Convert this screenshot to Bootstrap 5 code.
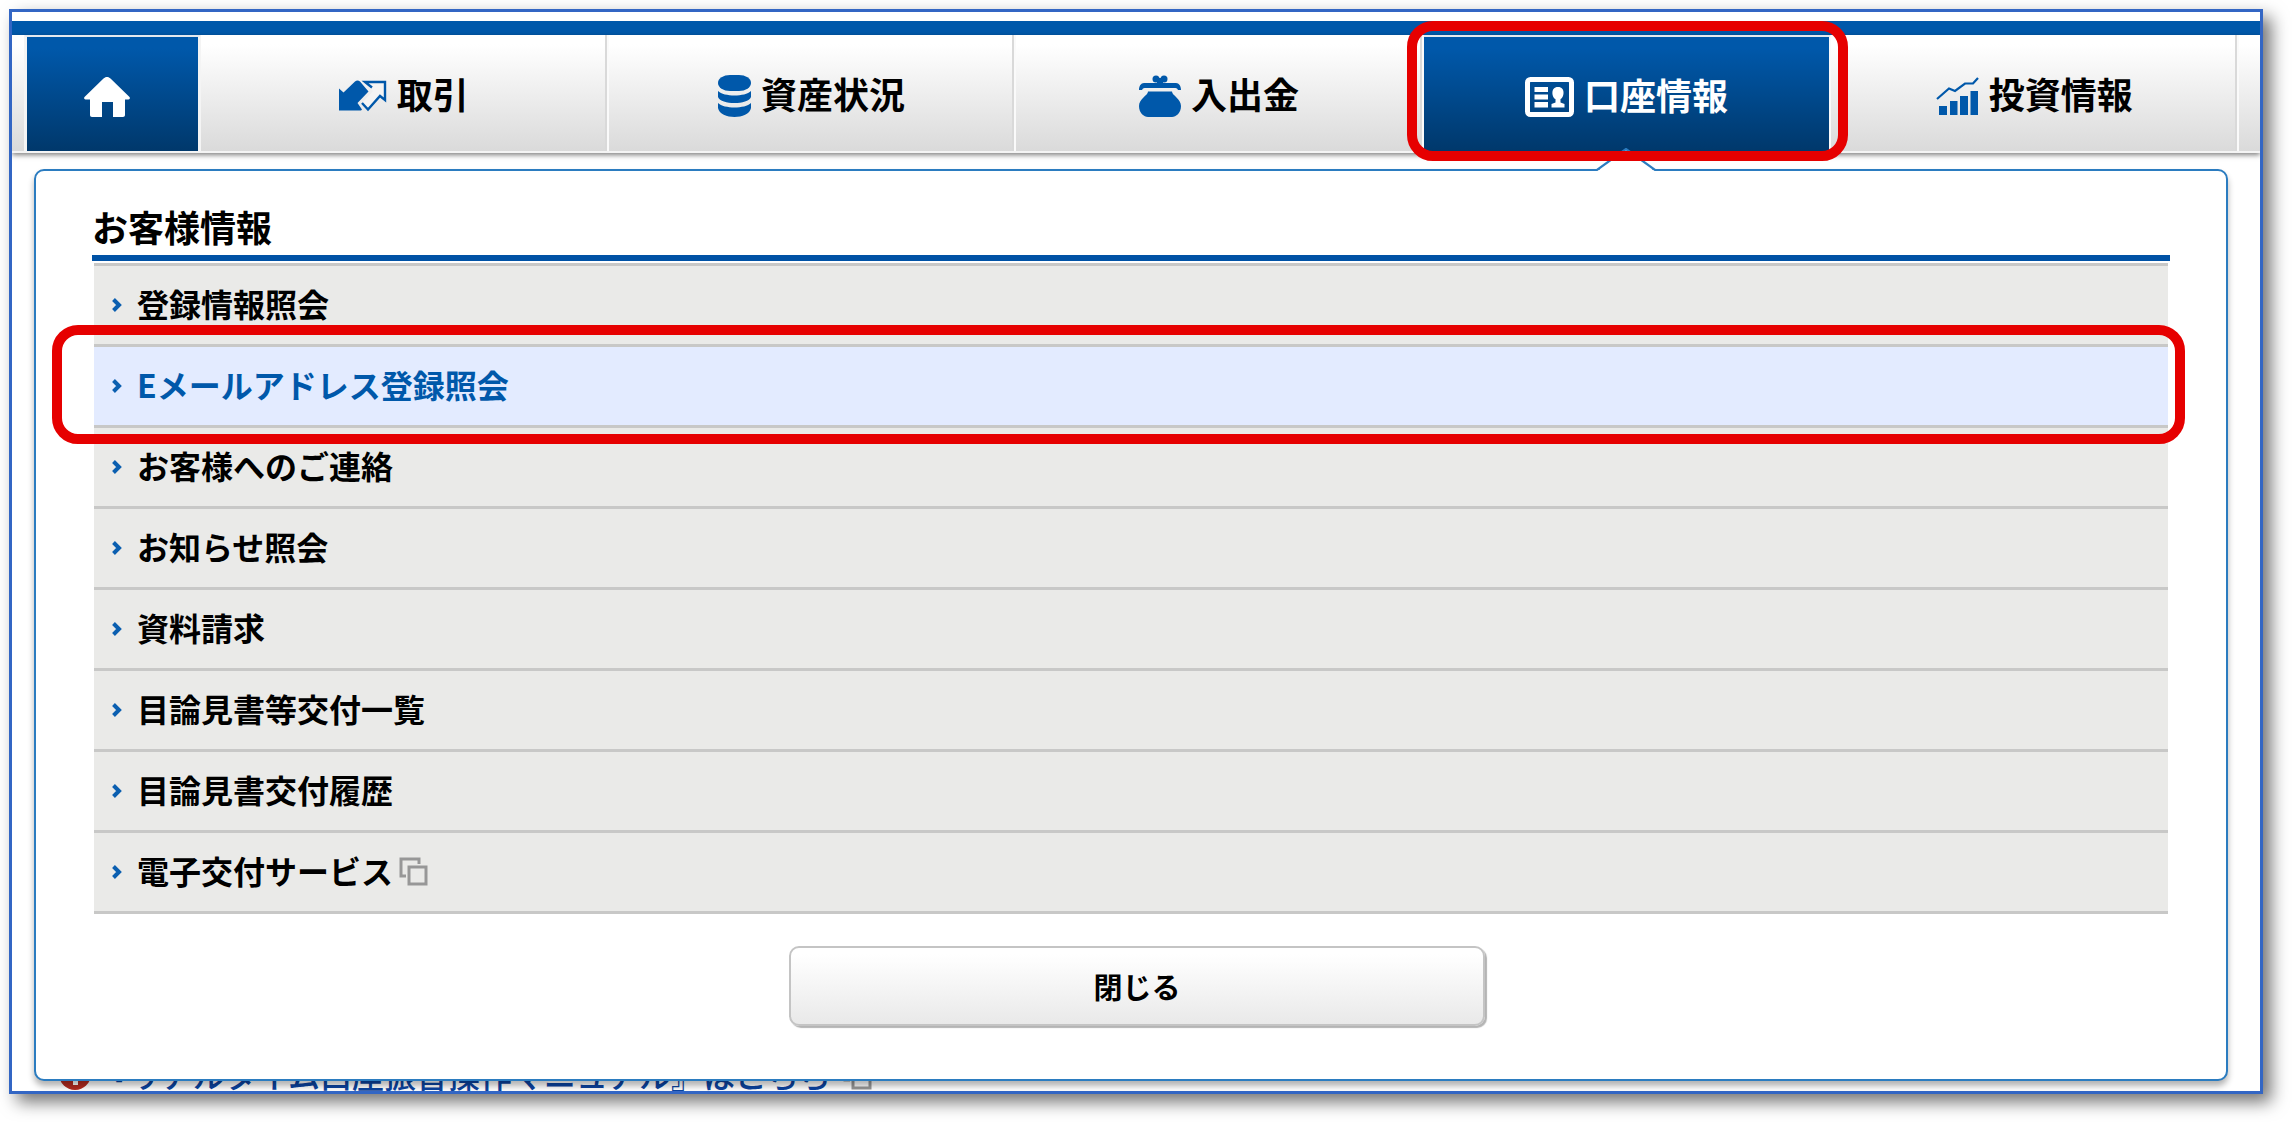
<!DOCTYPE html>
<html lang="ja">
<head>
<meta charset="utf-8">
<meta name="viewport" content="width=device-width, initial-scale=1">
<title>口座情報</title>
<link href="https://cdn.jsdelivr.net/npm/bootstrap@5.3.0/dist/css/bootstrap.min.css" rel="stylesheet">
<style>
  body {
    font-family: "Noto Sans CJK JP", sans-serif;
    color: #000;
    background: #fff;
    padding: 9px 29px 29px 9px;
  }
  .site-frame {
    border: 3px solid #3366c4;
    box-shadow: 8px 8px 16px rgba(0, 0, 0, .55);
    background: #fff;
    padding-top: 9px;
  }
  .site-clip { overflow: hidden; }
  .top-stripe { height: 14px; background: #0058aa; }
  .global-nav {
    height: 118px;
    border-bottom: 2px solid #f4f4f4;
    background: linear-gradient(#fff 8%, #dadada);
    box-shadow: 0 2px 5px rgba(0, 0, 0, .5);
    padding: 0 21px 0 12px;
  }
  .global-nav a {
    flex: 1 1 0;
    font-size: 36px;
    line-height: 54px;
    font-weight: 700;
    color: #000;
    gap: 10px;
    padding-top: 6px;
    border-right: 2px solid #fafafa;
    box-shadow: inset -2px 0 #d9d9d9;
  }
  .nav-text { padding-bottom: 6px; }
  .global-nav .nav-home {
    flex: 0 0 177px;
    border-left: 3px solid #f4f4f4;
    border-right: 3px solid #f4f4f4;
    padding-right: 12px;
  }
  .global-nav .nav-home, .global-nav .nav-current {
    color: #fff;
    background: linear-gradient(#0058aa 10%, #00386b) padding-box;
    border-top: 2px solid #e4e8ee;
    box-shadow: none;
  }
  .mark-ring {
    position: absolute;
    border: 10px solid #e60000;
    border-radius: 26px;
    pointer-events: none;
    z-index: 3;
  }
  .ring-tab { top: -16px; bottom: -10px; left: -17px; right: -19px; }
  .ring-row { top: -22px; bottom: -19px; left: -42px; right: -17px; }
  .mega-panel {
    z-index: 2;
    margin: 16px 32px 0 22px;
    border: 2px solid #2b7cc0;
    border-radius: 10px;
    background: #fff;
    box-shadow: 0 5px 6px rgba(0, 0, 0, .3);
    padding: 28px 56px 53px 56px;
  }
  .panel-arrow {
    position: absolute;
    top: -23px;
    left: 72.6%;
    transform: translateX(-50%);
  }
  .panel-title {
    font-size: 36px;
    line-height: 54px;
    font-weight: 700;
    margin: 0 0 2px;
    padding-bottom: 2px;
    border-bottom: 6px solid #0052a5;
  }
  .menu-list { margin: 0 2px; border-top: 3px solid #c8c8c7; }
  .menu-list .list-group-item {
    position: relative;
    border: 0;
    border-bottom: 3px solid #c8c8c7;
    background: #eaeae8;
    padding: 0;
  }
  .menu-list a {
    font-size: 32px;
    line-height: 74px;
    font-weight: 700;
    color: #000;
    padding: 0 0 4px 18px;
  }
  .menu-list .item-hot { background: #e3ebff; }
  .menu-list .item-hot a { color: #0058aa; }
  .chev { margin: 3px 15px 0 0; }
  .ext-icon { margin: 4px 0 0 6px; }
  .close-btn {
    width: 696px;
    max-width: 100%;
    height: 80px;
    margin: 32px 0 0 12px;
    border: 2px solid #c4c4c4;
    border-radius: 10px;
    background: linear-gradient(#fff 8%, #e9e9e9);
    box-shadow: 2px 2px 1px #b4b4b4;
    font-size: 29px;
    line-height: 44px;
    font-weight: 700;
    color: #000;
  }
  .notice-line {
    margin: -24px 0 0 47px;
    height: 34px;
    font-size: 32px;
    line-height: 34px;
    font-weight: 500;
    gap: 6px;
  }
  .notice-line a { color: #0b43a0; }
</style>
<script src="https://cdn.jsdelivr.net/npm/bootstrap@5.3.0/dist/js/bootstrap.bundle.min.js"></script>
</head>
<body>
<svg class="d-none" aria-hidden="true">
  <symbol id="chevron" viewBox="0 0 10 14"><path d="M1.500 1.500 7 7 1.500 12.500" fill="none" stroke="#0b5fb0" stroke-width="4"/></symbol>
  <symbol id="window" viewBox="0 0 30 30"><path d="M7 19H2V2h18v5M10 10h17v17H10z" fill="none" stroke="#979797" stroke-width="3"/></symbol>
</svg>
<div class="site-frame">
<div class="site-clip">
  <div class="top-stripe"></div>
  <nav class="global-nav d-flex position-relative" aria-label="メイン">
    <a href="#" class="nav-home d-flex align-items-center justify-content-center" aria-label="ホーム">
      <svg width="46" height="40" viewBox="0 0 46 40"><path d="M23 0c1.500 0 2.500.6 3.500 1.600L45.500 20c.8 1 .3 2.500-1 2.500H41V38c0 1.200-.8 2-2 2H29V25H18v15H8c-1.200 0-2-.8-2-2V22.500H1.500c-1.300 0-1.800-1.500-1-2.500L19.500 1.600C20.500.6 21.500 0 23 0z" fill="#fff"/></svg>
    </a>
    <a href="#" class="d-flex align-items-center justify-content-center text-decoration-none">
      <svg width="48" height="32" viewBox="0 0 48 32"><path d="M0 8.500 4.500 12.500 16 1.500q2.500-2 5 0l8.500 10L18.500 23 23 29.500 22 30.500H0z" fill="#0058aa"/><path d="M26 2H46V20L41 16 29 29.500 23 23 34 11z" fill="#f4f4f4"/><path d="M33 7.500 26 2H46V20L41 16 29 29.500 23 23" fill="none" stroke="#0058aa" stroke-width="2.400"/></svg>
      <span class="nav-text">取引</span>
    </a>
    <a href="#" class="d-flex align-items-center justify-content-center text-decoration-none">
      <svg width="33" height="42" viewBox="0 0 33 42" fill="#0058aa"><rect x="0" y="0" width="33" height="16" rx="12" ry="8"/><path d="M0 16c6 6 27 6 33 0v6c-3 8-30 8-33 0zM0 28c6 6 27 6 33 0v5c-1 6-9 9-16.500 9S1 39 0 33z"/></svg>
      <span class="nav-text">資産状況</span>
    </a>
    <a href="#" class="d-flex align-items-center justify-content-center text-decoration-none">
      <svg width="42" height="42" viewBox="0 0 42 42" fill="#0058aa"><circle cx="17" cy="4" r="3.500"/><circle cx="25" cy="4" r="3.500"/><path d="M18 3h6v6h-6zM5 8h32c3 0 5 3 5 7h-3c-1-2-2-2-4-2H7c-2 0-3 0-4 2H0c0-4 2-7 5-7z"/><path d="M9 16.500h24c0 4 9 7 9 14.500 0 7-5 11-9 11H9c-4 0-9-4-9-11 0-7.500 9-10.500 9-14.500z"/></svg>
      <span class="nav-text">入出金</span>
    </a>
    <a href="#" class="nav-current position-relative d-flex align-items-center justify-content-center text-decoration-none" aria-current="page">
      <svg width="49" height="40" viewBox="0 0 49 40" fill="#fff"><rect x="2.500" y="2.500" width="44" height="35" rx="3" fill="none" stroke="#fff" stroke-width="5"/><path d="M9.500 10H23v5H9.500zM9.500 17.500H23v5H9.500zM9.500 25H23v5.500H9.500zM33 10c8 0 6 11 2.500 12v3.500l4 1.500V30.500H26.500V27l4-1.500V22C27 21 25 10 33 10z"/></svg>
      <span class="nav-text">口座情報</span>
      <span class="mark-ring ring-tab"></span>
    </a>
    <a href="#" class="d-flex align-items-center justify-content-center text-decoration-none">
      <svg width="43" height="38" viewBox="0 0 43 38"><path d="M1 22 13 11.500l6 2.500L29 6.500h8L42 1" fill="none" stroke="#0058aa" stroke-width="2.200"/><path d="M3 29h8v9H3zM14 24h7.500v14H14zM24 19h8v19h-8zM34.500 14H42v24h-7.500z" fill="#0058aa"/></svg>
      <span class="nav-text">投資情報</span>
    </a>
  </nav>

  <section class="mega-panel position-relative">
    <svg class="panel-arrow" width="62" height="24" viewBox="0 0 62 24"><path d="M0 22 4 22 31 1 58 22 62 22V24H0z" fill="#fff"/><path d="M0 22H2L31 1 60 22H62" fill="none" stroke="#2b7cc0" stroke-width="2.200"/></svg>
    <h2 class="panel-title">お客様情報</h2>
    <ul class="menu-list list-group rounded-0">
      <li class="list-group-item"><a href="#" class="d-flex align-items-center text-decoration-none"><svg class="chev" width="10" height="14"><use href="#chevron"/></svg>登録情報照会</a></li>
      <li class="list-group-item item-hot"><a href="#" class="d-flex align-items-center text-decoration-none"><svg class="chev" width="10" height="14"><use href="#chevron"/></svg>Eメールアドレス登録照会</a><span class="mark-ring ring-row"></span></li>
      <li class="list-group-item"><a href="#" class="d-flex align-items-center text-decoration-none"><svg class="chev" width="10" height="14"><use href="#chevron"/></svg>お客様へのご連絡</a></li>
      <li class="list-group-item"><a href="#" class="d-flex align-items-center text-decoration-none"><svg class="chev" width="10" height="14"><use href="#chevron"/></svg>お知らせ照会</a></li>
      <li class="list-group-item"><a href="#" class="d-flex align-items-center text-decoration-none"><svg class="chev" width="10" height="14"><use href="#chevron"/></svg>資料請求</a></li>
      <li class="list-group-item"><a href="#" class="d-flex align-items-center text-decoration-none"><svg class="chev" width="10" height="14"><use href="#chevron"/></svg>目論見書等交付一覧</a></li>
      <li class="list-group-item"><a href="#" class="d-flex align-items-center text-decoration-none"><svg class="chev" width="10" height="14"><use href="#chevron"/></svg>目論見書交付履歴</a></li>
      <li class="list-group-item"><a href="#" class="d-flex align-items-center text-decoration-none"><svg class="chev" width="10" height="14"><use href="#chevron"/></svg>電子交付サービス<svg class="ext-icon" width="30" height="30"><use href="#window"/></svg></a></li>
    </ul>
    <div class="text-center">
      <button type="button" class="close-btn">閉じる</button>
    </div>
  </section>

  <div class="notice-line d-flex">
    <svg width="32" height="34" viewBox="0 0 32 34"><circle cx="16" cy="17" r="16" fill="#b32a20"/><path d="M14 7h5v14h-5zM14 24h5v4h-5z" fill="#fff"/></svg>
    <a href="#" class="text-decoration-none">『リアルタイム口座振替操作マニュアル』はこちら</a>
    <svg class="ext-icon" width="30" height="30"><use href="#window"/></svg>
  </div>
</div>
</div>
</body>
</html>
